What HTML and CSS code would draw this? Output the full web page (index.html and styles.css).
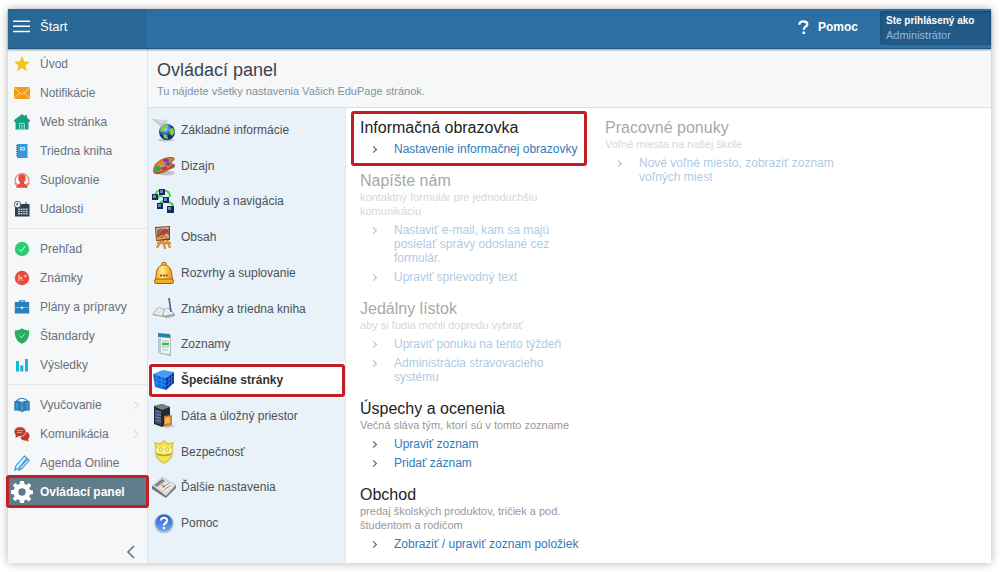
FILE: index.html
```html
<!DOCTYPE html>
<html lang="sk">
<head>
    <meta charset="UTF-8" />
    <meta name="viewport" content="width=device-width, initial-scale=1.0" />
    <title>Ovládací panel</title>
    <link rel="stylesheet" href="styles.css">
</head>
<body>
    <div class="app">
        <header class="topbar">
            <div class="topbar-start">
                <button class="menu-btn" type="button" aria-label="Menu">
                    <svg width="17" height="13" viewBox="0 0 17 13"><path d="M0 1.2h17M0 6.2h17M0 11.4h17" stroke="#fff" stroke-width="1.5"/></svg>
                </button>
                <a href="#">Štart</a>
            </div>
            <a class="help" href="#">
                <svg width="11" height="15" viewBox="0 0 11 15"><path d="M1.3 4.7C1.4 2.3 3 1.3 5.4 1.3c2.3 0 3.9 1 3.9 3 0 2.4-3.5 2.5-3.5 5.4" fill="none" stroke="#fff" stroke-width="2.3"/><path d="M4.4 11.5h2.7V14H4.4z" fill="#fff"/></svg>
                Pomoc
            </a>
            <div class="user">
                <strong>Ste prihlásený ako</strong>
                <span>Administrátor</span>
            </div>
        </header>

        <div class="layout">
            <nav class="sidebar" aria-label="Hlavné menu">
                <ul>
                    <li><a href="#"><svg viewBox="0 0 16 16"><path d="M8 0l2.1 5.5 5.9.3-4.6 3.7L13 15.4 8 12l-5 3.4 1.6-5.9L0 5.8l5.9-.3z" fill="#f1c40f"/></svg>Úvod</a></li>
                    <li><a href="#"><svg viewBox="0 0 16 16"><path d="M0 2h16v12H0z" fill="#f39c12"/><path d="M0 2.5l8 7 8-7M0 13.5L5.8 8M16 13.5L10.2 8" fill="none" stroke="#fbe3bd" stroke-width=".9"/></svg>Notifikácie</a></li>
                    <li><a href="#"><svg viewBox="0 0 16 16"><path d="M8 0l3 2.2V1h2v2.8L15.8 6v2H14.5v7.5h-13V8H.2V6z" fill="#16a085"/><path d="M5.7 15V9.3h4.6V15M8 11v4" fill="none" stroke="#b9e4da" stroke-width=".9"/></svg>Web stránka</a></li>
                    <li><a href="#"><svg viewBox="0 0 16 16"><path d="M3 1h10.5v14H3z" fill="#3498db"/><path d="M3 2v12" stroke="#2683c5" stroke-dasharray="1 1" stroke-width="2"/><path d="M6 4h5v3.5H6z" fill="#c3e2f7"/><path d="M7 5.7h3" stroke="#3498db"/></svg>Triedna kniha</a></li>
                    <li><a href="#"><svg viewBox="0 0 16 16"><path d="M3 13.5a7 7 0 1 1 10 0" fill="none" stroke="#ec7567" stroke-width="1.1"/><path d="M0 11.5l3.2-.2.4 3zM16 11.5l-3.2-.2-.4 3z" fill="#ec7567"/><path d="M8 2.3c2.7 0 3.9 1.7 3.7 4.2-.2 1.8-.8 2.9-1.7 3.7v1.2c1.4.8 3.4.9 3.7 4.4H2.3c.3-3.5 2.3-3.6 3.7-4.4v-1.2c-.9-.8-1.5-1.9-1.7-3.7C4.1 4 5.3 2.3 8 2.3z" fill="#e74c3c"/></svg>Suplovanie</a></li>
                    <li><a href="#"><svg viewBox="0 0 16 16"><path d="M1 3h14.5v12.5H1z" fill="#2c3e50"/><circle cx="3.5" cy="3.5" r="3.2" fill="#f5f7f9" stroke="#2c3e50" stroke-width=".8"/><path d="M3.5 1.7v2h-1.5M12 1v3" fill="none" stroke="#2c3e50"/><path d="M4 7.5h9.5v6H4z" fill="#cfd6dc"/><path d="M4 9.5h9.5M4 11.5h9.5M6.4 7v7M8.8 7v7M11.2 7v7" stroke="#2c3e50" stroke-width=".8"/></svg>Udalosti</a></li>
                </ul>
                <ul>
                    <li><a href="#"><svg viewBox="0 0 16 16"><circle cx="8" cy="8" r="7.2" fill="#2ecc71"/><path d="M5 8.2l2.2 2.2 3.8-5" fill="none" stroke="#d5f5e3"/></svg>Prehľad</a></li>
                    <li><a href="#"><svg viewBox="0 0 16 16"><circle cx="8" cy="8" r="7.2" fill="#e74c3c"/><path d="M4.8 11.5V5l4.2 6M4.8 9l3.6-1.6M9.8 6h3M11.3 4.5v3" fill="none" stroke="#f9cdc7" stroke-width=".9"/></svg>Známky</a></li>
                    <li><a href="#"><svg viewBox="0 0 16 16"><path d="M5.5 3V1.8h5V3" fill="none" stroke="#2980b9" stroke-width="1.2"/><path d="M.8 3h14.4v11.5H.8z" fill="#2980b9"/><path d="M.8 8.5h14.4" stroke="#86bade" stroke-width=".8"/><circle cx="8" cy="8.8" r="1.3" fill="#d3e7f5"/></svg>Plány a prípravy</a></li>
                    <li><a href="#"><svg viewBox="0 0 16 16"><path d="M8 .2C6 1.8 3.5 2.4.8 2.5.6 9 2.5 13.5 8 15.8c5.5-2.3 7.4-6.8 7.2-13.3C12.5 2.4 10 1.8 8 .2z" fill="#27ae60"/><path d="M5.5 7.5l2 2.2 3.2-4.2" fill="none" stroke="#b7e6ca"/></svg>Štandardy</a></li>
                    <li><a href="#"><svg viewBox="0 0 16 16"><path d="M2 4h3v10.5H2zM6.3 8.5h3v6h-3zM11 2h3v12.5h-3z" fill="#16b9d4"/></svg>Výsledky</a></li>
                </ul>
                <ul>
                    <li><a href="#"><svg viewBox="0 0 16 16"><path d="M2 4.5Q8-2 14 4.5" fill="none" stroke="#2980b9" stroke-width="1.2"/><path d="M.3 4.2Q4.500 3.2 8 5q3.5-1.8 7.7-.8v9.6Q11 13 8 15.2 5 13 .3 13.8z" fill="#2980b9"/><path d="M8 5v9M3 6v5.5M13 6v5.5" stroke="#7bb3da" stroke-width=".8"/></svg>Vyučovanie<svg class="more" viewBox="0 0 6 10"><path d="M1 1l4 4-4 4"/></svg></a></li>
                    <li><a href="#"><svg viewBox="0 0 16 16"><path d="M9 6c4-1 6.8 1 6.5 4.2-.1 1.4-.8 2.3-1.5 3l1 2.3-3-.9c-3 .3-5-1-5.5-3z" fill="#c0392b"/><ellipse cx="6" cy="5.7" rx="6" ry="5" fill="#c0392b" stroke="#f5f7f9" stroke-width=".7"/><path d="M2 8l-.5 4L5 10z" fill="#c0392b"/><path d="M3 4.5h6M3 6.500h5" stroke="#e5aaa3" stroke-width=".8"/></svg>Komunikácia<svg class="more" viewBox="0 0 6 10"><path d="M1 1l4 4-4 4"/></svg></a></li>
                    <li><a href="#"><svg viewBox="0 0 16 16"><path d="M.8 15.200l1.200-4.700L10.500 1l2.300 2-8 10.500z" fill="#d9edf9" stroke="#3498db" stroke-width="1.1"/><path d="M5 15.200l1-2.700L13.500 3.800l1.700 1.600L8 13.600z" fill="#d9edf9" stroke="#3498db" stroke-width="1.1"/></svg>Agenda Online</a></li>
                    <li class="current marked"><a href="#"><svg viewBox="0 0 22 22"><path fill-rule="evenodd" d="M9 0h4l.5 3 2 .9L18 2.1l2.300 2.400-2.100 2.500.8 2 3 .4v3.700l-3 .5-.8 2 2 2.500-2.500 2.400-2.400-1.900-2 .9L13 22H9l-.5-3-2-.8L4 20.100 1.700 17.800l1.900-2.500-.8-2L0 13V9.300L2.800 9l.9-2.200L1.900 4.300 4.300 2l2.300 1.800 2-.9zM11 7.300a3.700 3.700 0 1 0 0 7.400 3.700 3.700 0 0 0 0-7.400z" fill="#fff"/></svg>Ovládací panel</a></li>
                </ul>
                <button class="collapse" type="button" aria-label="Zbaliť menu">
                    <svg width="9" height="14" viewBox="0 0 9 14"><path d="M8 1L2 7l6 6" fill="none" stroke="#6b747c" stroke-width="1.6"/></svg>
                </button>
            </nav>

            <main>
                <div class="page-head">
                    <h1>Ovládací panel</h1>
                    <p>Tu nájdete všetky nastavenia Vašich EduPage stránok.</p>
                </div>
                <div class="panel">
                    <nav class="submenu" aria-label="Nastavenia">
                        <a href="#"><svg viewBox="0 0 24 24"><defs><radialGradient id="globe" cx=".38" cy=".3"><stop offset="0" stop-color="#c9e9ff"/><stop offset=".5" stop-color="#467fc6"/><stop offset="1" stop-color="#132c72"/></radialGradient></defs><path d="M0 1l15 1 1 5-5 4z" fill="#ced7da"/><path d="M0 1l10 6 5-5" fill="none" stroke="#aeb9be" stroke-width=".8"/><ellipse cx="14" cy="22" rx="8" ry="1.5" fill="#b6c0c6"/><circle cx="15" cy="14" r="8" fill="url(#globe)"/><path d="M9 9c2-3 5-3 7-2l-1 3-3 1-1 3-3-1zM17 11l4-1 2 4-3 4-2-2zM11 16l4 1 1 4-4-1z" fill="#83c941"/></svg>Základné informácie</a>
                        <a href="#"><svg viewBox="0 0 24 24"><ellipse cx="14" cy="19" rx="9" ry="2.5" fill="#bac3c8"/><path d="M1 17C1 9 9 4 17 3c6-.5 7 2 4 4-2 1.5-1 3 1 3 2 1 1 4-3 5-5 2-7 4-12 5-4 .5-6-.5-6-3z" fill="#a8602b"/><path d="M2 15C3 9 10 5 17 4c5-.5 5 1 3 2.5-2 2-1 3 0 4-4 4-8 7-14 7-3 .5-4-.5-4-2.500z" fill="#d6853f"/><ellipse cx="5.5" cy="14.5" rx="3" ry="2.4" fill="#24a757"/><ellipse cx="8.5" cy="9.7" rx="3" ry="2" fill="#ed7d28"/><ellipse cx="14" cy="6.5" rx="3" ry="1.8" fill="#8d31bd"/><ellipse cx="12" cy="14" rx="3.4" ry="2.1" fill="#e62e2e"/><ellipse cx="16" cy="10" rx="2.5" ry="1.8" fill="#355bd0"/><ellipse cx="10" cy="12" rx="1.8" ry="1.3" fill="#53d2dc"/></svg>Dizajn</a>
                        <a href="#"><svg viewBox="0 0 24 24"><path d="M3 6Q5 0 10 2M13 2q5 0 5 6M11 8q-5-3-5 2M16 13q5 1 5 5M12 12q-5 1-4 4" fill="none" stroke="#43d34b" stroke-width="2"/><path d="M7 0h6v6H7zM0 5h6v6H0zM11 8h6v6h-6zM5 14h6v6H5zM15 17h7v7h-7z" fill="#142a57"/><path d="M8 1h3v3H8zM1 6h3v3H1zM12 9h3v3h-3zM6 15h3v3H6zM16 18h3v3h-3z" fill="#6588cd"/></svg>Moduly a navigácia</a>
                        <a href="#"><svg viewBox="0 0 24 24"><path d="M9 15L5 23M15 15l3 8M11 14l2 10M5 18h14" stroke="#d99334" stroke-width="2.3"/><path d="M3 2l15-1v14L4 16z" fill="#754525"/><path d="M4 3l13-1v11L5 15z" fill="#dfb48e"/><path d="M5 5q5-3 8 0T5 13zM12 6l5-3v8z" fill="#8d6e67"/><path d="M6 12l8-8M9 13l7-8" stroke="#b9332b" stroke-width="1.8"/><path d="M4 14l5-3 6 1" stroke="#c98a3a" stroke-width="2" fill="none"/></svg>Obsah</a>
                        <a href="#"><svg viewBox="0 0 24 24"><defs><linearGradient id="bell"><stop stop-color="#ef9811"/><stop offset=".4" stop-color="#ffef87"/><stop offset="1" stop-color="#e58a09"/></linearGradient></defs><circle cx="12" cy="3.5" r="2.3" fill="#ffce35" stroke="#a85a08"/><path d="M4 16C4 11 5 4 12 4s8 7 8 12l1 4H3z" fill="url(#bell)" stroke="#b7680e"/><rect x="2.500" y="18" width="19" height="4.500" rx="2" fill="#f5ad20" stroke="#a85a08"/><path d="M8 14.500h8" stroke="#8f5412" stroke-width="2" stroke-dasharray="2 .8"/></svg>Rozvrhy a suplovanie</a>
                        <a href="#"><svg viewBox="0 0 24 24"><path d="M0 18l6-8 6 2 5-1 6 6v2l-8 2-4-1z" fill="#9fa9b0"/><path d="M1 17l6-7 5 3-2 6zM12 13l4-2 6 6-11 2z" fill="#f2f5f6" stroke="#a4afb8" stroke-width=".7"/><path d="M4 16l5-4M6 17l4-3M14 14l3 2" stroke="#b5bfc7" stroke-width=".7"/><path d="M17 1l2 14" stroke="#4c5ea9" stroke-width="1.7"/></svg>Známky a triedna kniha</a>
                        <a href="#"><svg viewBox="0 0 24 24"><path d="M7 2l12 1v21L8 22z" fill="#aab7bd"/><path d="M6 1l12 1v20L6 21z" fill="#eef4f3"/><path d="M6 1l12 1v4L6 5z" fill="#2487aa"/><path d="M6 6l3 .3V21H6z" fill="#b5cbd2"/><path d="M10 9h7M10 15h7M10 18h6" stroke="#aeb9bb"/><path d="M10 12h7" stroke="#39bd45" stroke-width="2.5"/></svg>Zoznamy</a>
                        <a class="active marked" href="#"><svg viewBox="0 0 24 24"><path d="M1 6l10-4 11 2-8 6z" fill="#3f9df5"/><path d="M1 6l13 4v12L3 19z" fill="#126bd8"/><path d="M14 10l8-6v11l-8 7z" fill="#0734a0"/><path d="M1.6 10L14 14l8-6M2.4 14L14 18l8-6M5 7v12M9.5 8v12M17 8v12M19.5 6v11M5 4.5L17 8M9 3l10 3" fill="none" stroke="#4aa6f5" stroke-width=".5"/></svg>Špeciálne stránky</a>
                        <a href="#"><svg viewBox="0 0 24 24"><path d="M2 2l8-2 8 3v16l-8 4-8-3z" fill="#242930"/><path d="M2 2l8-2 8 3-8 3z" fill="#77808a"/><path d="M3 5l6 2v14l-6-2z" fill="#424a56"/><path d="M3.5 7L9 8.5M3.5 10L9 11.5M3.5 13L9 14.5M3.5 16L9 17.5" stroke="#5a92ef" stroke-width="1.2"/><path d="M12 12l8-1v10l-8 2z" fill="#c78332"/><path d="M13 14l5-1v6l-5 1z" fill="#efb964"/><path d="M20 21l3 1-9 2-2-1z" fill="#b3b9b9"/></svg>Dáta a úložný priestor</a>
                        <a href="#"><svg viewBox="0 0 24 24"><path d="M12 0l4 3 6-1-1 6c1 8-2 13-9 16C5 21 2 16 3 8L2 2l6 1z" fill="#d8ca62"/><path d="M12 2l4 3 4-1-1 4c1 7-1 11-7 14-6-3-8-7-7-14L4 4l4 1z" fill="#f5e948"/><path d="M4 9q8-5 16 0l-1 4H5z" fill="#fcf7a0"/><circle cx="9" cy="9.5" r="1.8" fill="none" stroke="#d3be2f"/><circle cx="15" cy="9.5" r="1.8" fill="none" stroke="#d3be2f"/><path d="M5 14q7 3 14 0" fill="none" stroke="#b5a226" stroke-width="1.6"/></svg>Bezpečnosť</a>
                        <a href="#"><svg viewBox="0 0 24 24"><path d="M0 11l10-9 14 8v3L14 23 0 14z" fill="#71777a"/><path d="M0 10l10-8 14 8-10 11z" fill="#d9dcda"/><path d="M2 10l8-6 3 2-8 6z" fill="#888f91"/><path d="M8 12l7-5 6 3-7 7z" fill="#f3f3ee"/><path d="M4 10l7-5M10 13l7-5M12 15l7-5" stroke="#6c7170" stroke-width=".8"/><path d="M10 10l3 2" stroke="#c35b42" stroke-width="1.2"/></svg>Ďalšie nastavenia</a>
                        <a href="#"><svg viewBox="0 0 24 24"><defs><linearGradient id="ask" x2="0" y2="1"><stop stop-color="#2c5fc4"/><stop offset="1" stop-color="#6fa5f5"/></linearGradient></defs><circle cx="12" cy="12.5" r="9.8" fill="#b9c3cf"/><circle cx="12" cy="12" r="8.500" fill="url(#ask)"/><path d="M8.8 9.500c.4-3.600 6.400-3.600 6.400 0 0 2.300-3.200 2.500-3.200 4.900" fill="none" stroke="#fff" stroke-width="2"/><circle cx="12" cy="17" r="1.200" fill="#fff"/></svg>Pomoc</a>
                    </nav>

                    <div class="columns">
                        <div class="column">
                            <section class="marked">
                                <h2>Informačná obrazovka</h2>
                                <ul>
                                    <li><a href="#">Nastavenie informačnej obrazovky</a></li>
                                </ul>
                            </section>
                            <section class="disabled">
                                <h2>Napíšte nám</h2>
                                <p>kontaktný formulár pre jednoduchšiu komunikáciu</p>
                                <ul>
                                    <li><a href="#">Nastaviť e-mail, kam sa majú posielať správy odoslané cez formulár.</a></li>
                                    <li><a href="#">Upraviť sprievodný text</a></li>
                                </ul>
                            </section>
                            <section class="disabled">
                                <h2>Jedálny lístok</h2>
                                <p>aby si ľudia mohli dopredu vybrať</p>
                                <ul>
                                    <li><a href="#">Upraviť ponuku na tento týždeň</a></li>
                                    <li><a href="#">Administrácia stravovacieho systému</a></li>
                                </ul>
                            </section>
                            <section>
                                <h2>Úspechy a ocenenia</h2>
                                <p>Večná sláva tým, ktorí sú v tomto zozname</p>
                                <ul>
                                    <li><a href="#">Upraviť zoznam</a></li>
                                    <li><a href="#">Pridať záznam</a></li>
                                </ul>
                            </section>
                            <section>
                                <h2>Obchod</h2>
                                <p>predaj školských produktov, tričiek a pod. študentom a rodičom</p>
                                <ul>
                                    <li><a href="#">Zobraziť / upraviť zoznam položiek</a></li>
                                </ul>
                            </section>
                        </div>
                        <div class="column">
                            <section class="disabled">
                                <h2>Pracovné ponuky</h2>
                                <p>Voľné miesta na našej škole</p>
                                <ul>
                                    <li><a href="#">Nové voľné miesto, zobraziť zoznam voľných miest</a></li>
                                </ul>
                            </section>
                        </div>
                    </div>
                </div>
            </main>
        </div>
    </div>
</body>
</html>
```

FILE: styles.css
```css
* { box-sizing: border-box; }
body {
    font-family: "Liberation Sans", Arial, sans-serif;
    font-size: 12px;
    display: flex;
    min-height: 100vh;
    margin: 0;
    padding: 9px 9px 9px 8px;
    background: #fff;
}
a { color: inherit; text-decoration: none; }
ul { list-style: none; margin: 0; padding: 0; }
h1, h2, p { margin: 0; font-weight: normal; }
button { border: 0; padding: 0; background: none; cursor: pointer; }
svg { display: block; flex: none; }

.app {
    flex: 1;
    display: flex;
    flex-direction: column;
    background: #fff;
    box-shadow: 0 0 9px rgba(0, 0, 0, 0.3);
}

/* Top bar */
.topbar {
    position: relative;
    display: flex;
    align-items: stretch;
    height: 40px;
    background: #2c6fa5;
    border-bottom: 1px solid #205783;
    box-shadow: 0 1px 2px rgba(0, 0, 0, 0.4);
    color: #fff;
}
.topbar-start {
    display: flex;
    align-items: center;
    gap: 10px;
    width: 139px;
    padding: 0 5px 4px;
    background: #296896;
    font-size: 13px;
}
.help {
    display: flex;
    align-items: center;
    gap: 9px;
    margin-left: auto;
    padding: 0 22px 3px;
    font-weight: bold;
}
.user {
    display: flex;
    flex-direction: column;
    justify-content: center;
    width: 111px;
    margin: 2px 0 3px;
    padding-left: 6px;
    background: #235a85;
    border-radius: 3px 0 0 3px;
    box-shadow: inset 0 1px 3px rgba(0, 0, 0, 0.25);
    font-size: 10px;
    line-height: 15px;
}
.user span { color: #8fb9dd; font-size: 11px; }

.layout { flex: 1; display: flex; }

/* Left navigation */
.sidebar {
    display: flex;
    flex-direction: column;
    width: 140px;
    background: #f5f7f9;
    border-right: 1px solid #dfe4e8;
    color: #69717c;
}
.sidebar ul { padding: 5px 0; border-bottom: 1px solid #e1e5e8; }
.sidebar ul:first-child { padding-top: 0; }
.sidebar ul:last-of-type { border-bottom: 0; }
.sidebar a {
    display: flex;
    align-items: center;
    gap: 10px;
    height: 29px;
    padding: 0 8px 0 6px;
}
.sidebar a svg { width: 16px; height: 16px; }
.sidebar a .more {
    width: 6px;
    height: 10px;
    margin-left: auto;
    fill: none;
    stroke: #d3d7da;
}
.sidebar .current a {
    gap: 7px;
    padding-left: 3px;
    background: #607d8b;
    color: #fff;
    font-weight: bold;
}
.sidebar .current svg { width: 22px; height: 22px; }
.collapse { align-self: flex-end; margin: auto 12px 4px 0; }

/* Page */
main { flex: 1; display: flex; flex-direction: column; }
.page-head {
    height: 59px;
    padding: 10px 9px;
    background: #f5f7f9;
    border-bottom: 1px solid #d9dee2;
}
h1 { color: #3c4450; font-size: 18px; line-height: 22px; }
.page-head p { color: #8492a0; font-size: 11px; line-height: 20px; }
.panel { flex: 1; display: flex; }

.submenu {
    display: grid;
    grid-auto-rows: 1fr;
    width: 198px;
    padding: 4px 0 22px;
    background: #e9f2f8;
    border-right: 1px solid #dde8f3;
    color: #4b5157;
}
.submenu a {
    display: flex;
    align-items: center;
    gap: 5px;
    padding-left: 4px;
}
.submenu svg { width: 24px; height: 24px; }
.submenu .active { background: #fff; color: #333; font-weight: bold; }

/* Settings sections */
.columns { display: flex; gap: 19px; padding: 10px 14px; }
.column {
    display: flex;
    flex-direction: column;
    gap: 15px;
    width: 226px;
}
.column:last-child { width: 240px; }
h2 { color: #222; font-size: 16px; line-height: 19px; }
section p { color: #999; font-size: 11px; line-height: 14px; }
section ul {
    display: grid;
    gap: 5px;
    padding: 5px 0 0 34px;
    line-height: 14px;
}
section li { position: relative; color: #337ab7; }
section li::before {
    content: "";
    position: absolute;
    top: 5px;
    left: -23px;
    width: 4px;
    height: 4px;
    border: solid #555;
    border-width: 1px 1px 0 0;
    transform: rotate(45deg);
}
.disabled { opacity: 0.4; }

/* Red highlight frames */
.marked { position: relative; }
.marked::after {
    content: "";
    position: absolute;
    inset: -2px;
    border: 3px solid #c01f26;
    border-radius: 3px;
    pointer-events: none;
}
.submenu .marked::after { inset: 2px 0 1px 1px; }
section.marked::after { inset: -7px -1px -10px -9px; }
```
